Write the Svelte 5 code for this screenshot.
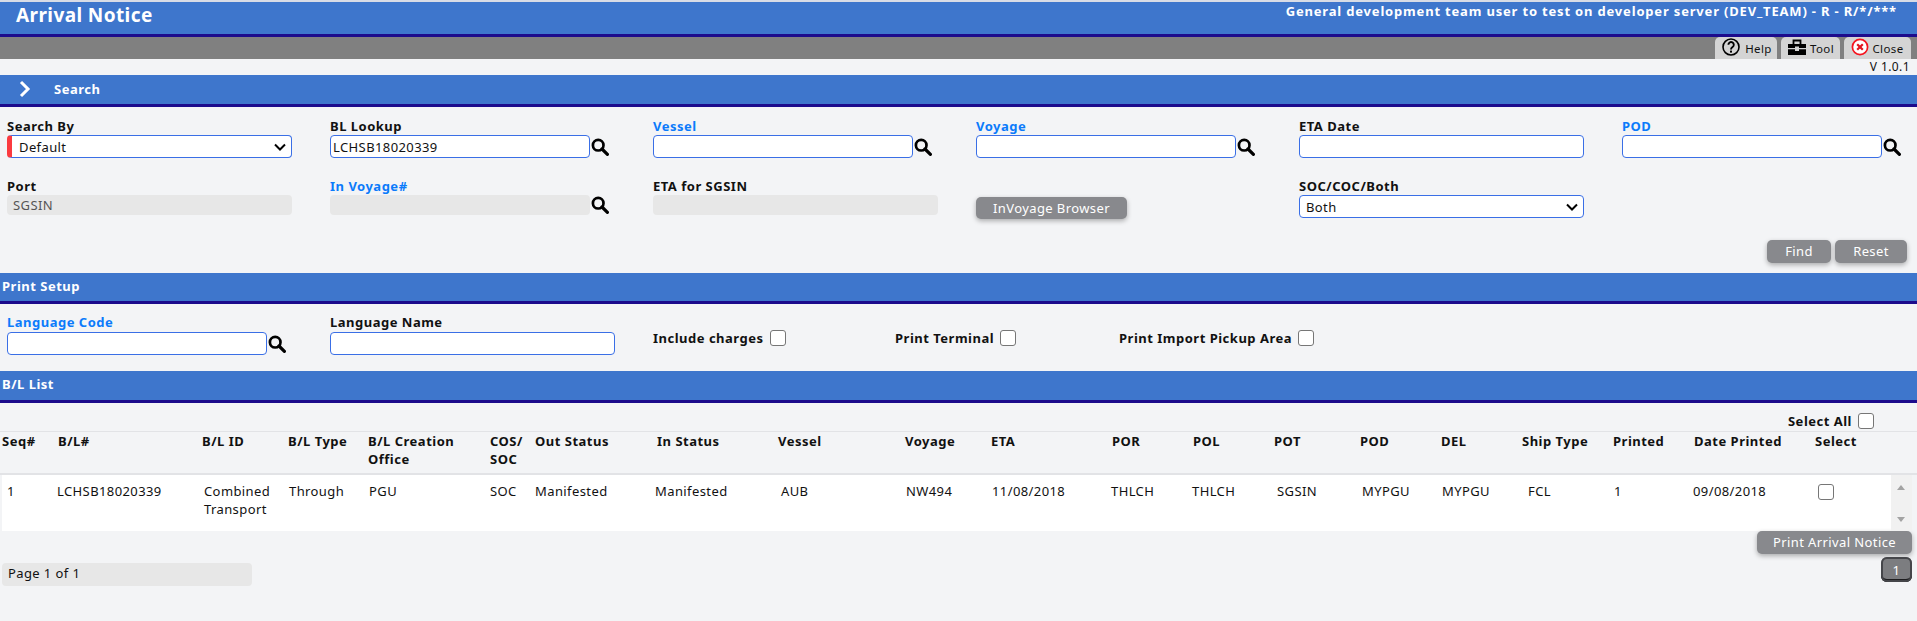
<script>
  const columns = [
    { head: "Seq#", x: 2, value: "1", vx: 7 },
    { head: "B/L#", x: 58, value: "LCHSB18020339", vx: 57 },
    { head: "B/L ID", x: 202, value: "Combined Transport", vx: 204 },
    { head: "B/L Type", x: 288, value: "Through", vx: 289 },
    { head: "B/L Creation Office", x: 368, value: "PGU", vx: 369 },
    { head: "COS/ SOC", x: 490, value: "SOC", vx: 490 },
    { head: "Out Status", x: 535, value: "Manifested", vx: 535 },
    { head: "In Status", x: 657, value: "Manifested", vx: 655 },
    { head: "Vessel", x: 778, value: "AUB", vx: 781 },
    { head: "Voyage", x: 905, value: "NW494", vx: 906 },
    { head: "ETA", x: 991, value: "11/08/2018", vx: 992 },
    { head: "POR", x: 1112, value: "THLCH", vx: 1111 },
    { head: "POL", x: 1193, value: "THLCH", vx: 1192 },
    { head: "POT", x: 1274, value: "SGSIN", vx: 1277 },
    { head: "POD", x: 1360, value: "MYPGU", vx: 1362 },
    { head: "DEL", x: 1441, value: "MYPGU", vx: 1442 },
    { head: "Ship Type", x: 1522, value: "FCL", vx: 1528 },
    { head: "Printed", x: 1613, value: "1", vx: 1614 },
    { head: "Date Printed", x: 1694, value: "09/08/2018", vx: 1693 },
    { head: "Select", x: 1815, value: "", vx: 1818 },
  ];
  const tracks = columns
    .map((c, i) => (columns[i + 1] ? columns[i + 1].x - c.x : 76) + "px")
    .join(" ");
</script>

{#snippet lens()}
  <svg class="lens" width="18" height="18" viewBox="0 0 18 18" aria-hidden="true">
    <circle cx="7.2" cy="7.2" r="5.3" fill="none" stroke="#000" stroke-width="2.7" />
    <path d="M11 11l5.400 5.400" stroke="#000" stroke-width="3.200" stroke-linecap="round" />
  </svg>
{/snippet}

{#snippet chevron()}
  <svg class="chevron" width="12" height="8" viewBox="0 0 12 8" aria-hidden="true">
    <path d="M1 1.500l5 5 5-5" fill="none" stroke="#000" stroke-width="2" />
  </svg>
{/snippet}

<div class="page">
  <header class="title-bar">
    <h1>Arrival Notice</h1>
    <p>General development team user to test on developer server (DEV_TEAM) - R - R/*/***</p>
  </header>

  <div class="tool-bar">
    <button class="tool help" type="button">
      <svg width="22" height="20" viewBox="0 0 20 20" aria-hidden="true">
        <circle cx="10" cy="10" r="8" fill="none" stroke="#000" stroke-width="1.6" />
        <path d="M7.400 7.800a2.700 2.700 0 1 1 4.200 2.200c-1 .7-1.600 1.100-1.600 2.400" fill="none" stroke="#000" stroke-width="1.900" />
        <rect x="9" y="13.600" width="2" height="2" fill="#000" />
      </svg>
      <span>Help</span>
    </button>
    <button class="tool kit" type="button">
      <svg width="20" height="18" viewBox="0 0 20 18" aria-hidden="true">
        <path d="M6.500 6V2.500h7V6" fill="none" stroke="#000" stroke-width="1.800" />
        <path d="M1 6h18v4H12V8.500H8V10H1zM1 11.300h7V13h4v-1.700h7V17H1z" fill="#000" />
      </svg>
      <span>Tool</span>
    </button>
    <button class="tool shut" type="button">
      <svg width="18" height="18" viewBox="0 0 18 18" aria-hidden="true">
        <circle cx="9" cy="9" r="7.600" fill="#fff" stroke="#f5141e" stroke-width="1.700" />
        <path d="M6.200 6.200l5.600 5.600M11.800 6.200l-5.600 5.600" stroke="#e0141e" stroke-width="2.200" />
      </svg>
      <span>Close</span>
    </button>
  </div>
  <div class="version">V 1.0.1</div>

  <section class="band search-band">
    <svg width="14" height="20" viewBox="0 0 14 20" aria-hidden="true">
      <path d="M3 3l7 7-7 7" fill="none" stroke="#fff" stroke-width="3" />
    </svg>
    <span>Search</span>
  </section>

  <div class="form-grid search-grid">
    <div class="field">
      <label for="search-by">Search By</label>
      <div class="select-wrap">
        <select id="search-by" class="required"><option>Default</option></select>
        {@render chevron()}
      </div>
    </div>
    <div class="field">
      <label for="bl-lookup">BL Lookup</label>
      <div class="with-lens"><input id="bl-lookup" value="LCHSB18020339" />{@render lens()}</div>
    </div>
    <div class="field">
      <label class="link" for="vessel">Vessel</label>
      <div class="with-lens"><input id="vessel" />{@render lens()}</div>
    </div>
    <div class="field">
      <label class="link" for="voyage">Voyage</label>
      <div class="with-lens"><input id="voyage" />{@render lens()}</div>
    </div>
    <div class="field">
      <label for="eta-date">ETA Date</label>
      <input id="eta-date" />
    </div>
    <div class="field">
      <label class="link" for="pod">POD</label>
      <div class="with-lens"><input id="pod" />{@render lens()}</div>
    </div>

    <div class="field">
      <label for="port">Port</label>
      <input id="port" class="locked" value="SGSIN" disabled />
    </div>
    <div class="field">
      <label class="link" for="in-voyage">In Voyage#</label>
      <div class="with-lens"><input id="in-voyage" class="locked" disabled />{@render lens()}</div>
    </div>
    <div class="field">
      <label for="eta-port">ETA for SGSIN</label>
      <input id="eta-port" class="locked" disabled />
    </div>
    <div class="field browser-cell">
      <button class="grey-btn browser" type="button">InVoyage Browser</button>
    </div>
    <div class="field">
      <label for="soc">SOC/COC/Both</label>
      <div class="select-wrap">
        <select id="soc"><option>Both</option></select>
        {@render chevron()}
      </div>
    </div>
  </div>

  <div class="find-row">
    <button class="grey-btn find" type="button">Find</button>
    <button class="grey-btn reset" type="button">Reset</button>
  </div>

  <section class="band print-band"><span>Print Setup</span></section>

  <div class="form-grid print-grid">
    <div class="field">
      <label class="link" for="lang-code">Language Code</label>
      <div class="with-lens"><input id="lang-code" />{@render lens()}</div>
    </div>
    <div class="field">
      <label for="lang-name">Language Name</label>
      <input id="lang-name" />
    </div>
    <div class="checks">
      <label class="check c1">Include charges <input type="checkbox" /></label>
      <label class="check c2">Print Terminal <input type="checkbox" /></label>
      <label class="check">Print Import Pickup Area <input type="checkbox" /></label>
    </div>
  </div>

  <section class="band"><span>B/L List</span></section>

  <div class="select-all">
    <label class="check">Select All <input type="checkbox" /></label>
  </div>

  <div class="table">
    <div class="thead" style={`grid-template-columns: ${tracks}`}>
      {#each columns as col}
        <div class="th">{col.head}</div>
      {/each}
    </div>
    <div class="tbody">
      <div class="tr" style={`grid-template-columns: ${tracks}`}>
        {#each columns as col}
          <div class="td" style={`margin-left: ${col.vx - col.x}px`}>
            {#if col.head === "Select"}
              <input type="checkbox" />
            {:else}
              {col.value}
            {/if}
          </div>
        {/each}
      </div>
      <div class="scroll">
        <i class="up"></i>
        <i class="down"></i>
      </div>
    </div>
  </div>

  <div class="actions">
    <button class="grey-btn print" type="button">Print Arrival Notice</button>
  </div>

  <div class="pager">
    <div class="page-info">Page 1 of 1</div>
    <button class="page-num" type="button">1</button>
  </div>
</div>

<style>
  :global(body) {
    margin: 0;
    background: #f3f4f6;
  }
  .page {
    height: 621px;
    overflow: hidden;
    background: #f3f4f6;
    color: #111;
    font-family: "Noto Sans", "DejaVu Sans", sans-serif;
    font-size: 13px;
    letter-spacing: 0.4px;
  }
  button,
  input,
  select {
    font: inherit;
    letter-spacing: inherit;
  }
  .title-bar {
    box-sizing: border-box;
    height: 37px;
    border-top: 2px solid #d8dce6;
    border-bottom: 3px solid #1c0b8c;
    background: #3e76cc;
    display: flex;
    justify-content: space-between;
    color: #fff;
    padding: 0 20px 0 16px;
  }
  h1 {
    margin: 0;
    font-size: 19px;
    font-weight: 700;
    line-height: 26px;
  }
  .title-bar p {
    margin: 0;
    font-size: 13px;
    font-weight: 700;
    letter-spacing: 0.82px;
    line-height: 19px;
  }
  .tool-bar {
    height: 22px;
    background: #808080;
    display: flex;
    justify-content: flex-end;
    gap: 4px;
    padding-right: 6px;
  }
  .tool {
    display: flex;
    align-items: center;
    justify-content: center;
    gap: 3px;
    height: 22px;
    border: 0;
    border-radius: 5px 5px 0 0;
    background: #d4d4d4;
    color: #111;
    font-size: 11.5px;
    padding: 0;
  }
  .tool svg {
    margin-top: -3px;
  }
  .help { width: 62px; }
  .kit { width: 59px; }
  .shut { width: 67px; }
  .version {
    height: 16px;
    line-height: 16px;
    text-align: right;
    padding-right: 7px;
    font-size: 12px;
  }
  .band {
    box-sizing: border-box;
    height: 32px;
    border-bottom: 3px solid #1c0b8c;
    background: #3e76cc;
    color: #fff;
    font-size: 13px;
    font-weight: 700;
    letter-spacing: 0.5px;
    display: flex;
    align-items: center;
    padding: 0 0 3px 2px;
  }
  .print-band {
    height: 31px;
  }
  .search-band {
    padding-left: 18px;
    padding-bottom: 1px;
    gap: 22px;
  }
  .form-grid {
    display: grid;
    grid-template-columns: repeat(6, 285px);
    column-gap: 38px;
    padding-left: 7px;
  }
  .search-grid {
    padding-top: 10px;
    row-gap: 19px;
  }
  .field {
    display: flex;
    flex-direction: column;
    align-items: flex-start;
  }
  .field label {
    height: 18px;
    line-height: 18px;
    font-weight: 700;
    letter-spacing: 0.5px;
  }
  .print-grid .field label {
    line-height: 16px;
  }
  .field label.link {
    color: #0b7bfb;
  }
  input:not([type="checkbox"]),
  select {
    box-sizing: border-box;
    width: 285px;
    height: 23px;
    border: 1px solid #3a6fe6;
    border-radius: 4px;
    background: #fff;
    color: #111;
    padding: 0 2px;
    outline: 0;
  }
  select {
    appearance: none;
    display: block;
    padding: 0 20px 0 6px;
  }
  select.required {
    border-left: 5px solid #fb3a3f;
    padding-left: 7px;
  }
  .select-wrap {
    position: relative;
  }
  .chevron {
    position: absolute;
    right: 6px;
    top: 8px;
    pointer-events: none;
  }
  input.locked {
    height: 20px;
    border: 0;
    background: #e7e7e7;
    color: #555;
    padding-left: 6px;
  }
  .with-lens {
    display: flex;
    align-items: center;
    gap: 1px;
  }
  .with-lens input:not([type="checkbox"]) {
    width: 260px;
  }
  .lens {
    flex: none;
  }
  .browser-cell {
    padding-top: 20px;
  }
  .grey-btn {
    box-sizing: border-box;
    border: 0;
    border-radius: 5px;
    background: #88898d;
    color: #fff;
    box-shadow: 0 2px 5px rgb(0 0 0 / 0.3);
    font-size: 13px;
    height: 22px;
    padding: 0;
  }
  .browser {
    width: 151px;
  }
  .find-row {
    display: flex;
    justify-content: flex-end;
    gap: 4px;
    padding: 0 10px 10px 0;
    margin-top: 21px;
  }
  .find-row .grey-btn {
    height: 23px;
    padding-bottom: 2px;
  }
  .find { width: 64px; }
  .reset { width: 72px; }
  .print-grid {
    padding-top: 10px;
    padding-bottom: 16px;
    height: 41px;
  }
  .checks {
    grid-column: 3 / -1;
    display: flex;
    align-items: flex-start;
    padding-top: 15px;
  }
  .check {
    display: inline-flex;
    align-items: center;
    gap: 6px;
    font-weight: 700;
    letter-spacing: 0.5px;
  }
  .c1 { width: 242px; }
  .c2 { width: 224px; }
  input[type="checkbox"] {
    appearance: none;
    box-sizing: border-box;
    width: 16px;
    height: 16px;
    margin: 0;
    border: 1px solid #767676;
    border-radius: 3px;
    background: #fff;
  }
  .select-all {
    box-sizing: border-box;
    height: 28px;
    display: flex;
    justify-content: flex-end;
    align-items: center;
    padding: 8px 43px 0 0;
  }
  .table {
    border-top: 1px solid #e2e3e6;
  }
  .thead {
    display: grid;
    box-sizing: border-box;
    height: 43px;
    padding: 0 0 0 2px;
    border-bottom: 2px solid #e2e3e6;
    line-height: 18px;
    font-weight: 700;
    letter-spacing: 0.5px;
  }
  .tbody {
    display: flex;
    height: 56px;
    margin: 0 5px 0 2px;
    background: #fff;
  }
  .tr {
    flex: 1;
    display: grid;
    padding-top: 7px;
    line-height: 18px;
  }
  .td {
    min-width: 0;
  }
  .td input {
    margin-top: 2px;
  }
  .scroll {
    position: relative;
    width: 21px;
    background: #f1f1f1;
  }
  .scroll i {
    position: absolute;
    left: 6px;
    width: 0;
    height: 0;
    border-left: 4.5px solid transparent;
    border-right: 4.5px solid transparent;
  }
  .up {
    top: 10px;
    border-bottom: 5px solid #a3a3a3;
  }
  .down {
    top: 42px;
    border-top: 5px solid #a3a3a3;
  }
  .actions {
    display: flex;
    justify-content: flex-end;
    padding-right: 5px;
  }
  .print {
    width: 155px;
    height: 23px;
    padding-bottom: 2px;
  }
  .pager {
    display: flex;
    justify-content: space-between;
    align-items: flex-start;
    padding: 3px 5px 0 2px;
  }
  .page-info {
    box-sizing: border-box;
    width: 250px;
    height: 23px;
    margin-top: 6px;
    line-height: 20px;
    border-radius: 4px;
    background: #e7e7e7;
    padding-left: 6px;
  }
  .page-num {
    box-sizing: border-box;
    width: 31px;
    height: 25px;
    border: 0;
    border-radius: 6px;
    background: #7c7d80;
    color: #fff;
    box-shadow: inset 0 0 0 2px #45464a, inset 0 -3px 0 #1d1d1f;
    padding: 0;
  }
</style>
